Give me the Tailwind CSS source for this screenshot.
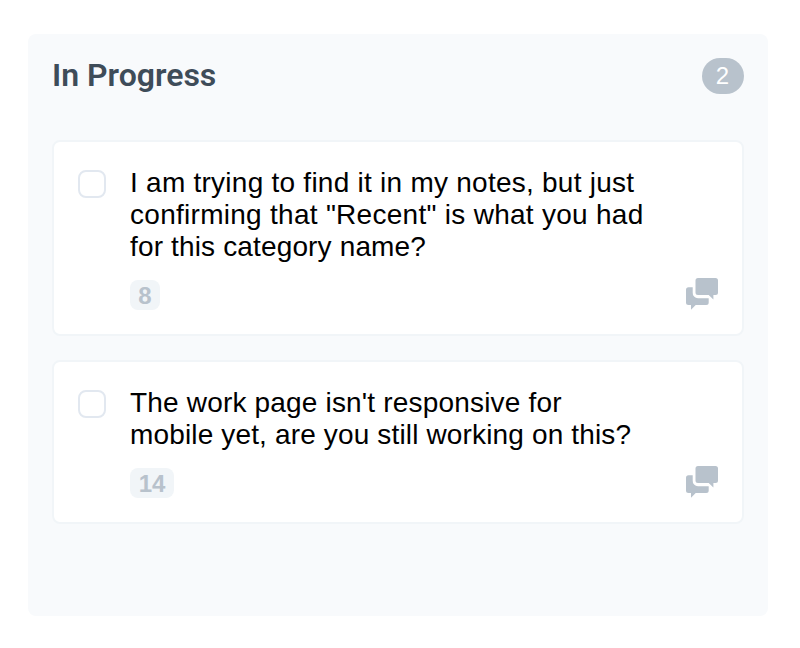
<!DOCTYPE html>
<html lang="en">
<head>
  <meta charset="UTF-8" />
  <meta name="viewport" content="width=device-width, initial-scale=1.0" />
  <title>In Progress</title>
  <script src="https://cdn.jsdelivr.net/npm/@tailwindcss/browser@4"></script>
</head>
<body class="bg-white pt-[34px] pl-7 font-['Liberation_Sans',Arial,sans-serif]">
  <section class="w-[740px] h-[582px] px-6 pt-6 rounded-lg bg-[#f8fafc]">
    <header class="flex justify-between items-center h-9 mb-[46px]">
      <h2 class="-mt-0.5 font-['Roboto',sans-serif] text-[32px] leading-9 font-semibold text-[#3e4c59]">In Progress</h2>
      <span class="flex justify-center items-center w-[42px] h-9 pr-px rounded-full bg-[#b8c2cc] text-2xl leading-9 text-white">2</span>
    </header>
    <div class="flex flex-col gap-6">
      <article class="flex gap-6 p-6 border-2 border-[#f1f5f8] rounded-lg bg-white">
        <span class="shrink-0 mt-1 w-7 h-7 border-2 border-[#e2e8f0] rounded-lg"></span>
        <div class="grow">
          <p class="pt-px -mb-px text-[28px] leading-8 text-black whitespace-nowrap">
            <span class="block tracking-[0.25px]">I am trying to find it in my notes, but just</span>
            <span class="block tracking-[0.28px]">confirming that "Recent" is what you had</span>
            <span class="block tracking-[0.15px]">for this category name?</span>
          </p>
          <div class="flex justify-between items-end mt-[18px] h-[30px]">
            <span class="min-w-[30px] px-2 h-[30px] pt-px rounded-lg bg-[#f1f5f8] text-2xl leading-[30px] font-bold text-center text-[#b8c2cc]">8</span>
            <svg class="w-8 h-8" viewBox="0 0 32 32" fill="#b8c2cc">
              <path d="M12 0h17.500a2.500 2.500 0 0 1 2.500 2.500v12a2.500 2.500 0 0 1-2.500 2.500h-2.100v4.600L22.700 17H12a2.500 2.500 0 0 1-2.500-2.500v-12A2.500 2.500 0 0 1 12 0z" />
              <path d="M2.500 9.300h4.200v5.200A5.300 5.300 0 0 0 12 20.200h10.700v4.300a2.500 2.500 0 0 1-2.500 2.500H9.700L5 31.700V27H2.500A2.500 2.500 0 0 1 0 24.500V11.800a2.500 2.500 0 0 1 2.500-2.500z" />
            </svg>
          </div>
        </div>
      </article>
      <article class="flex gap-6 p-6 border-2 border-[#f1f5f8] rounded-lg bg-white">
        <span class="shrink-0 mt-1 w-7 h-7 border-2 border-[#e2e8f0] rounded-lg"></span>
        <div class="grow">
          <p class="pt-px -mb-px text-[28px] leading-8 text-black whitespace-nowrap">
            <span class="block tracking-[0.18px]">The work page isn't responsive for</span>
            <span class="block tracking-[0.15px]">mobile yet, are you still working on this?</span>
          </p>
          <div class="flex justify-between items-end mt-[18px] h-[30px]">
            <span class="min-w-[44px] px-2 h-[30px] pt-px rounded-lg bg-[#f1f5f8] text-2xl leading-[30px] font-bold text-center text-[#b8c2cc]">14</span>
            <svg class="w-8 h-8" viewBox="0 0 32 32" fill="#b8c2cc">
              <path d="M12 0h17.500a2.500 2.500 0 0 1 2.500 2.500v12a2.500 2.500 0 0 1-2.500 2.500h-2.100v4.600L22.700 17H12a2.500 2.500 0 0 1-2.500-2.500v-12A2.500 2.500 0 0 1 12 0z" />
              <path d="M2.500 9.300h4.200v5.200A5.300 5.300 0 0 0 12 20.200h10.700v4.300a2.500 2.500 0 0 1-2.500 2.500H9.700L5 31.700V27H2.500A2.500 2.500 0 0 1 0 24.500V11.800a2.500 2.500 0 0 1 2.500-2.500z" />
            </svg>
          </div>
        </div>
      </article>
    </div>
  </section>
</body>
</html>
